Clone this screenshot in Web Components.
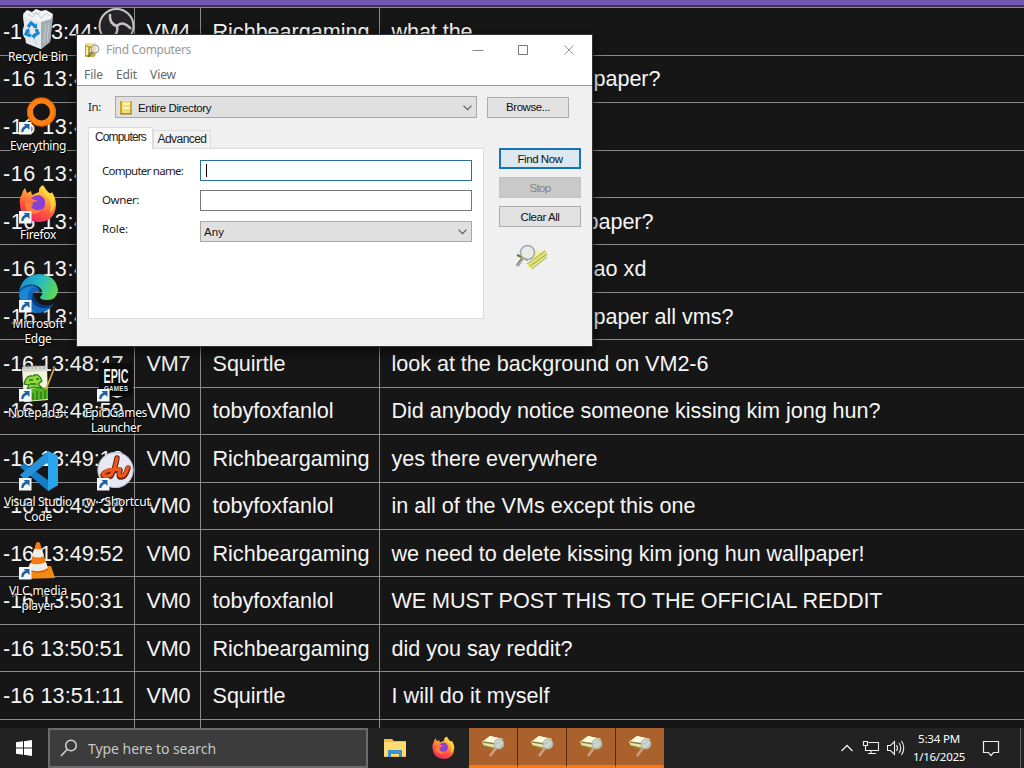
<!DOCTYPE html>
<html lang="en"><head><meta charset="utf-8"><title>Desktop</title>
<style>html,body{margin:0;width:1024px;height:768px;overflow:hidden;background:#161616}</style></head>
<body><win-desktop></win-desktop>
<script>
const define=(name,html,init)=>customElements.define(name,class extends HTMLElement{
  constructor(){super();this.attachShadow({mode:'open'})}
  connectedCallback(){this.shadowRoot.innerHTML=typeof html==='function'?html(this):html;if(init)init(this)}
});

// A single line of text spaced to occupy a given advance width
define('fit-text','<style>:host{display:inline-block;white-space:pre}span{display:inline-block}</style><span><slot></slot></span>',el=>{
  const w=+el.getAttribute('w');if(!w)return;
  const n=el.textContent.length,nat=el.shadowRoot.querySelector('span').getBoundingClientRect().width;
  el.style.letterSpacing=((w-nat)/n)+'px';
});

const firefox=`<defs><linearGradient id="fx" x1=".75" y1="0" x2=".3" y2="1"><stop offset="0" stop-color="#ffe84a"/><stop offset=".35" stop-color="#ffa436"/><stop offset=".68" stop-color="#ff5040"/><stop offset="1" stop-color="#e6266a"/></linearGradient></defs>
<path d="M3 9Q4 5 6 3L8 8L12 6L13 10Q17 8 20 7Q19 3 24 0Q25 4 30 8Q32 9 33 7Q37 13 37 20Q36 37 19 37Q2 36 1 20Q0 13 3 9Z" fill="url(#fx)"/>
<path d="M12 13Q17 10 20 10Q27 12 26 20Q24 26 18 26Q12 25 11 19L15 17L19 16Q14 15 12 13Z" fill="#8a3fd6"/>
<path d="M23 2Q24 8 29 13Q34 18 31 28Q35 24 36 18Q36 12 32 9Q27 6 25 1Z" fill="#ffd83c" opacity=".85"/><path d="M7 17Q10 19 14 18Q14 21 12 22Q16 27 23 24Q17 32 9 27Q5 23 7 17Z" fill="#ff8a35" opacity=".8"/>`;

const art={
recycle:`<path d="M23 15L36 11L53 15L50 42L41 49L26 43Z" fill="#c3ccd4"/><path d="M23 15L41 20L41 49L26 43Z" fill="#e3e8ec"/><path d="M41 20L53 15L50 42L41 49Z" fill="#a3abb3"/><path d="M23 14L27 10L32 12L36 9L41 11L46 10L53 14L51 19L41 22L25 17Z" fill="#f1f4f6"/><path d="M27 14l6 3 3-5 5 6 6-5 3 3M30 12l4 2 6-1" fill="none" stroke="#c6cdd3" stroke-width="1"/><path d="M46 24L44 43M49 23L47 41M34 39l3 6" stroke="#c4cbd1"/><g fill="none" stroke="#1985d2" stroke-width="3.2"><path d="M28 27L31 23L35 26"/><path d="M36 29L38 33L34 36"/><path d="M31 36L26 34L28 30"/></g><path d="M33 28h4v-5zM35 33v6l-4-3zM25 31l4-3 1 5z" fill="#1985d2"/>`,
obs:`<circle cx="38.5" cy="26" r="17" fill="#252326" stroke="#c6c4c7" stroke-width="2"/><g fill="none" stroke="#c6c4c7" stroke-width="2.5"><path d="M32 14Q31 24 39 26"/><path d="M53 29Q45 20 39 26"/><path d="M28 37Q41 38 39 26"/></g>`,
everything:`<circle cx="41.5" cy="23" r="11.5" fill="none" stroke="#ff7f11" stroke-width="6"/><circle cx="41.5" cy="23" r="14" fill="none" stroke="#d85f08" stroke-width="1"/>`,
firefox:`<g transform="translate(19 7)">${firefox}</g>`,
edge:`<defs><linearGradient id="e1" x1="0" y1=".2" x2="1" y2=".5"><stop offset="0" stop-color="#1686d3"/><stop offset=".5" stop-color="#25b9c7"/><stop offset="1" stop-color="#5cd853"/></linearGradient></defs><path d="M19 25Q22 8 39 7Q56 8 58 23Q57 33 47 33Q40 33 40 30Q44 27 41 22Q36 16 27 18Q21 20 19 25Z" fill="url(#e1)"/><path d="M19 25Q24 17 33 18Q40 20 40 26Q34 23 32 29Q32 39 43 41Q50 41 54 37Q47 47 35 46Q21 43 19 25Z" fill="#1168bd"/><path d="M32 27Q30 40 44 41Q50 41 55 36Q50 39 44 38Q34 36 34 27Z" fill="#0a397a"/><path d="M19 27Q24 18 34 20Q26 23 28 34Q30 42 37 46Q20 43 19 27Z" fill="#1b86d3"/>`,
notepad:`<path d="M22 11L47 10L48 44L24 46Z" fill="#f1f5de"/><path d="M22 11L47 10V15L22 16Z" fill="#d6d8d0"/><path d="M24 9v4M28 9v4M32 9v4M36 9v4M40 9v4M44 9v4" stroke="#909b94" stroke-width="1"/><path d="M23 37Q34 30 48 32V43L28 45Z" fill="#53b51f"/><path d="M25 25Q27 19 33 20Q37 17 40 21L42 25L38 28L42 32L34 31L27 33L29 29L24 28Z" fill="#8fd83a" stroke="#28721e" stroke-width="1.2"/><path d="M29 24h4M36 23h3M30 28h6" stroke="#28721e" stroke-width="1.3"/><path d="M33 37v7M37 35v9M41 36v7M45 34v9" stroke="#287518" stroke-width="1.3"/><path d="M46 33L54 13" stroke="#d8a832" stroke-width="1.8"/><path d="M54 13l1-3" stroke="#5c5028" stroke-width="1.5"/>`,
epic:`<path d="M21 7H55V39Q39 47 21 40Z" fill="#0d0d0d"/><text x="38" y="27" text-anchor="middle" font-family="Liberation Sans" font-size="20" font-weight="bold" fill="#f3f3f3" textLength="25" lengthAdjust="spacingAndGlyphs">EPIC</text><text x="38" y="35" text-anchor="middle" font-family="Liberation Sans" font-size="6.5" font-weight="bold" fill="#e8e8e8" textLength="24">GAMES</text><path d="M33 40h12l-6 2z" fill="#ddd"/>`,
vscode:`<path d="M48 6L58 11V40L48 46L20 22L24 18L48 35Z" fill="#157dc8"/><path d="M48 6L58 11V40L48 46Z" fill="#2ba4ee"/><path d="M48 6V17L25 35L20 30Z" fill="#2692d9"/>`,
rw:`<circle cx="37.5" cy="25" r="18" fill="#e6e9f3"/><circle cx="37.5" cy="25" r="17.5" fill="none" stroke="#aeb6c8"/><g fill="none" stroke-linecap="round" stroke-linejoin="round"><path d="M39 13Q37 24 33 31Q26 34 25 30Q27 25 42 25Q40 33 43 32Q47 33 50 23" stroke="#6d2215" stroke-width="5.5"/><path d="M39 13Q37 24 33 30Q26 33 25 29Q27 24 42 24Q40 32 43 31Q47 32 50 22" stroke="#ea5a1e" stroke-width="3.4"/></g>`,
vlc:`<path d="M25 33L51 32L55 44L22 45Z" fill="#f58a12"/><path d="M36 9Q38 7 40 9L48 35Q40 41 29 36Z" fill="#f27c10"/><path d="M34 15h8l2 7Q38 25 32 22ZM30 29Q38 32 46 28L48 34Q39 40 28 35Z" fill="#edece8"/><path d="M29 36Q40 41 48 35" fill="none" stroke="#b9580c"/>`};

define('desk-icon',el=>{
  const k=el.getAttribute('kind'),sc=!['recycle','obs'].includes(k);
  return `<style>:host{display:block;position:absolute;width:76px;text-align:center;color:#fff;font:12px/15px "Noto Sans",sans-serif;text-shadow:1px 1px 1px #000,0 0 2px #000,0 1px 2px #000}svg{display:block;margin-top:6px;overflow:visible}.l{display:flex;flex-direction:column;align-items:center;margin:1px -10px 0}</style>
<svg width="76" height="42" viewBox="0 6 76 42">${art[k]}${sc?'<path d="M19 33h12.500v12.500h-12.500z" fill="#f4f7fa"/><path d="M22.500 43Q22 39 27 37.500" fill="none" stroke="#23609f" stroke-width="2.400"/><path d="M23.500 35h6v6z" fill="#23609f"/>':''}</svg><div class="l"><slot></slot></div>`});

// Each row: time, vm, user, message, message indent, message width
const rows=[
['-16 13:44:','VM4','Richbeargaming','what the',0,81],
['-16 13:4','','','paper?',202,67],
['-16 13:4','','','',0,0],
['-16 13:4','','','',0,0],
['-16 13:4','','','paper?',195,67],
['-16 13:4','','','ao xd',202,53],
['-16 13:4','','','paper all vms?',202,140],
['-16 13:48:47','VM7','Squirtle','look at the background on VM2-6',0,317],
['-16 13:48:59','VM0','tobyfoxfanlol','Did anybody notice someone kissing kim jong hun?',0,489],
['-16 13:49:13','VM0','Richbeargaming','yes there everywhere',0,206],
['-16 13:49:38','VM0','tobyfoxfanlol','in all of the VMs except this one',0,304],
['-16 13:49:52','VM0','Richbeargaming','we need to delete kissing kim jong hun wallpaper!',0,473],
['-16 13:50:31','VM0','tobyfoxfanlol','WE MUST POST THIS TO THE OFFICIAL REDDIT',0,491],
['-16 13:50:51','VM0','Richbeargaming','did you say reddit?',0,181],
['-16 13:51:11','VM0','Squirtle','I will do it myself',0,158],
['','','','',0,0]];
const uw={Richbeargaming:157,tobyfoxfanlol:121,Squirtle:73};
define('chat-log',`<style>:host{display:block;height:728px;overflow:hidden;background:#161616;color:#f5f5f5;font:21.6px "Liberation Sans",Arial,sans-serif}
.top{height:5px;background:#7157ad}.gap{height:2.2px;background:#41345a}
.t{display:grid;grid-template-columns:135px 66px 179px 1fr;grid-auto-rows:47.45px}
.c{box-sizing:border-box;border-top:1px solid #8a8a8a;border-right:1px solid #8a8a8a;padding:1px 0 0 11.5px;display:flex;align-items:center;overflow:hidden;white-space:pre}
.c:nth-child(4n+1){padding-left:3px}.c:nth-child(4n){border-right:0}</style><div class="top"></div><div class="gap"></div><div class="t">${rows.map(r=>{
const tw=r[0].length==12?120.5:r[0].length==10?95:r[0].length?83.5:0,f=(t,w,s='')=>`<div class="c">${t?`<fit-text w="${w}" style="${s}">${t}</fit-text>`:''}</div>`;
return f(r[0],tw)+f(r[1],44)+f(r[2],uw[r[2]])+f(r[3],r[5],`margin-left:${r[4]}px`)}).join('')}</div>`);

define('push-button',`<style>:host{display:flex;box-sizing:border-box;width:82px;height:21px;border:1px solid #acacac;background:#e1e1e1;align-items:center;justify-content:center;font:11.5px "Liberation Sans",sans-serif;color:#111}
:host([primary]){border:2px solid #1874b8;background:#dce8f0}:host([disabled]){background:#c9c9c9;border-color:#c2c2c2;color:#858585}</style><slot></slot>`);
define('combo-box',`<style>:host{display:flex;box-sizing:border-box;align-items:center;border:1px solid #a8a8a8;background:#e0e0e0;font:11.5px "Liberation Sans",sans-serif;padding:1px 4px 0 3px;color:#111}.v{flex:1;display:flex;align-items:center;gap:5px}</style><div class="v"><slot></slot></div><svg width="9" height="6"><path d="M.5 .7L4.5 4.7L8.5 .7" fill="none" stroke="#555" stroke-width="1.1"/></svg>`);

define('find-dialog',`<style>:host{display:block;position:absolute;left:77px;top:35px;width:515px;height:311px;background:#f0f0f0;box-shadow:0 0 0 1px #333,0 4px 10px 2px #000a;font:11.5px "Noto Sans",sans-serif;color:#222}
*{box-sizing:border-box}
header{height:29px;background:#fff;display:flex;align-items:center;padding-left:7px;font-size:12px;color:#999}header fit-text{flex:1;margin-left:6px}.x{display:flex;width:138px}.x svg{flex:none}
nav{height:22px;background:#fff;border-bottom:1px solid #999;display:flex;gap:13px;padding-left:7px;align-items:center;font-size:12px;line-height:20px;color:#666}
.in{display:grid;grid-template-columns:27px 362px 82px;column-gap:0;height:22px;margin:10px 0 0 11px;align-items:center}.in>fit-text{margin-top:-2px}.in combo-box{height:22px}.in push-button{margin-left:10px}
.m{display:flex;margin:9px 0 0 11px;gap:15px}.tabs{display:flex;align-items:flex-end;height:21px;position:relative}
.tab{height:18px;width:58px;border:1px solid #dcdcdc;border-bottom:0;background:#f2f2f2;font:12px "Liberation Sans",sans-serif;display:flex;align-items:center;justify-content:center;padding-bottom:1px}
.tab.a{height:22px;width:65px;background:#fff;margin-bottom:-1px;z-index:1;padding-bottom:3px}
.panel{width:396px;height:171px;background:#fff;border:1px solid #dcdcdc;padding:11px 0 0 13px}
.f{display:grid;grid-template-columns:98px 272px;grid-template-rows:21px 21px 21px;row-gap:9px;align-items:center}.f combo-box{height:21px;margin-top:2px}.f>fit-text{margin-top:-1px}.f>fit-text:nth-of-type(2){margin-top:-3px}.f>fit-text:nth-of-type(3){margin-top:-4px}
.i{height:21px;border:1px solid #777;background:#fff}.i.a{border-color:#2c6da0;background:#fbffff;padding:3px 5px}.i.a::before{content:"";display:block;width:1px;height:13px;background:#000}
.b{display:flex;flex-direction:column;gap:8px;padding-top:21px}.b svg{margin:9px 0 0 16px}</style>
<header><svg width="16" height="16"><path d="M1 1h11v12l-2 2H1z" fill="#d6c052"/><path d="M1 1h11v4H1z" fill="#eee193"/><path d="M1 14l9 1V5L1 3z" fill="#b8a33b"/><path d="M3 5v8M7 6v7" stroke="#f5eeb0" stroke-width="2"/><circle cx="11" cy="7" r="4" fill="#e8ecebbb" stroke="#989c98"/><path d="M8 10l-4 5" stroke="#776e41" stroke-width="2"/></svg><fit-text w="85">Find Computers</fit-text>
<div class="x"><svg width="138" height="28"><path d="M18.500 14.500h11" stroke="#888"/><path d="M64.500 9.500h9v9h-9z" fill="none" stroke="#777"/><path d="M110.500 9.500l9 9m0-9l-9 9" stroke="#999"/></svg></div></header>
<nav><fit-text w="19">File</fit-text><fit-text w="21">Edit</fit-text><fit-text w="26">View</fit-text></nav>
<div class="in"><fit-text w="13">In:</fit-text><combo-box><svg width="14" height="15"><path d="M1 1h12v13H1z" fill="#c6a92d"/><path d="M3 1h8v12H3z" fill="#f1dc73"/><path d="M4 4h7M4 8h7" stroke="#fff7ba" stroke-width="2"/><path d="M1 14h12" stroke="#8c772c"/></svg><fit-text w="73">Entire Directory</fit-text></combo-box><push-button><fit-text w="44">Browse...</fit-text></push-button></div>
<div class="m"><div><div class="tabs"><div class="tab a"><fit-text w="51">Computers</fit-text></div><div class="tab"><fit-text w="49">Advanced</fit-text></div></div>
<div class="panel"><div class="f"><fit-text w="81">Computer name:</fit-text><div class="i a"></div><fit-text w="37">Owner:</fit-text><div class="i"></div><fit-text w="26">Role:</fit-text><combo-box><fit-text w="20">Any</fit-text></combo-box></div></div></div>
<div class="b"><push-button primary><fit-text w="45">Find Now</fit-text></push-button><push-button disabled><fit-text w="21">Stop</fit-text></push-button><push-button><fit-text w="39">Clear All</fit-text></push-button>
<svg width="34" height="28"><path d="M2 11L19 6L31 8L21 15L5 13Z" fill="#f4f1a2"/><path d="M31 6L32 12L16 25L12 21L29 7Z" fill="#e2e07a"/><path d="M12 20L30 7M15 22L32 10M17 25L32 13" fill="none" stroke="#a3a548" stroke-width="1"/><path d="M2 11l11 5" stroke="#77702e" stroke-width="2"/><circle cx="12.500" cy="8.500" r="7" fill="#e4ebeecc" stroke="#9ca9ad" stroke-width="1.500"/><path d="M7 15L2 22" stroke="#777" stroke-width="3"/><path d="M7 16L2 22" stroke="#ddd"/></svg></div></div>`);

const finder=`<svg width="28" height="28"><path d="M3 9L11 3L24 6L24 10L17 17L5 13Z" fill="#ece6a4"/><path d="M3 9L11 3L24 6L17 10Z" fill="#fffce2"/><path d="M4 9l13 2 7-4M5 13l13 3" fill="none" stroke="#8c7c3b" stroke-width="1.300"/><circle cx="20" cy="11" r="5" fill="#c7d4d4dd" stroke="#a5aba3"/><path d="M17 15l-6 8" stroke="#d0a07e" stroke-width="2.500"/></svg>`;
define('task-bar',`<style>:host{display:flex;height:40px;background:#222;font:14px "Noto Sans",sans-serif;color:#fff}*{box-sizing:border-box}
.s,.a,.w{display:flex;align-items:center;justify-content:center}.s{width:48px}.q{width:320px;border:2px solid #6c6c6c;background:#3c3c3c;display:flex;align-items:center;padding-left:10px;gap:10px;color:#c7c7c7}
.a{width:49px}.g{display:flex}.w{width:49px;background:#aa612b;border-right:1px solid #512d17;border-bottom:3px solid #fa7814}.w:last-child{border-right-color:#aa612b;width:48px}
.t{margin-left:auto;display:flex;align-items:center;width:184px}.t>*{flex:none}.c{width:54px;text-align:center;font-size:11.500px;line-height:18px}.c fit-text{display:block;width:max-content;margin:0 auto}.n{margin-left:16px}.d{height:40px;width:1px;background:#666;margin-left:20px}</style>
<div class="s"><svg width="16" height="16"><path d="M0 2.300L7 1.300V7.500H0zM8 1.200L16 0V7.500H8zM0 8.500H7V14.700L0 13.700zM8 8.500H16V16L8 14.800z" fill="#fff"/></svg></div>
<div class="q"><svg width="18" height="18"><circle cx="11" cy="6.500" r="5.300" fill="none" stroke="#d5d5d5" stroke-width="1.500"/><path d="M7 10.500L1 17" stroke="#d5d5d5" stroke-width="1.500"/></svg><fit-text w="128">Type here to search</fit-text></div>
<div class="g" style="margin-left:2px"><div class="a"><svg width="22" height="20"><path d="M0 1h8l2 2h12v16H0z" fill="#eebc3e"/><path d="M0 4h22v14H0z" fill="#ffdc72"/><path d="M4 12h14v7h-3v-3H7v3H4z" fill="#3b91d0"/></svg></div><div class="a"><svg width="23" height="24" viewBox="0 0 38 38">${firefox}</svg></div></div>
<div class="g" style="margin-left:1px"><div class="w">${finder}</div><div class="w">${finder}</div><div class="w">${finder}</div><div class="w">${finder}</div></div>
<div class="t"><svg width="72" height="24"><path d="M1.500 15L7 9.500L12.500 15" fill="none" stroke="#eee" stroke-width="1.300"/><g fill="none" stroke="#eee" stroke-width="1.100"><path d="M28.500 6.500h10v8h-13v-3M31 14.500v3M28 17.500h8M23.500 5.500h4v4h-4zM25.500 9.500v3"/><path d="M47.500 9.500h3l4-4v13l-4-4h-3zM56.500 9q2 3 0 6M59 7q3.500 5 0 10M61.500 5q4.500 7 0 14"/></g></svg><div class="c"><fit-text w="42">5:34 PM</fit-text><fit-text w="52">1/16/2025</fit-text></div><svg class="n" width="18" height="18"><path d="M1.500 2.500h15v11h-5l-2.500 3l-2.500-3h-5z" fill="none" stroke="#eee" stroke-width="1.200"/></svg><div class="d"></div></div>`);

const icons=[[0,0,'recycle',['Recycle Bin',60]],[78,0,'obs'],[0,89,'everything',['Everything',56]],[0,178,'firefox',['Firefox',36]],[0,267,'edge',['Microsoft',51],['Edge',27]],[0,356,'notepad',['Notepad++',60]],[78,356,'epic',['Epic Games',62],['Launcher',50]],[0,445,'vscode',['Visual Studio',68],['Code',28]],[78,445,'rw',['rw - Shortcut',69]],[0,534,'vlc',['VLC media',58],['player',33]]];
define('win-desktop',`<style>:host{display:block;position:relative;width:1024px;height:768px;overflow:hidden}</style><chat-log></chat-log>${icons.map(([x,y,k,...l])=>`<desk-icon kind="${k}" style="left:${x}px;top:${y}px">${l.map(([t,w])=>`<fit-text w="${w}">${t}</fit-text>`).join('')}</desk-icon>`).join('')}<find-dialog></find-dialog><task-bar></task-bar>`);
</script></body></html>
